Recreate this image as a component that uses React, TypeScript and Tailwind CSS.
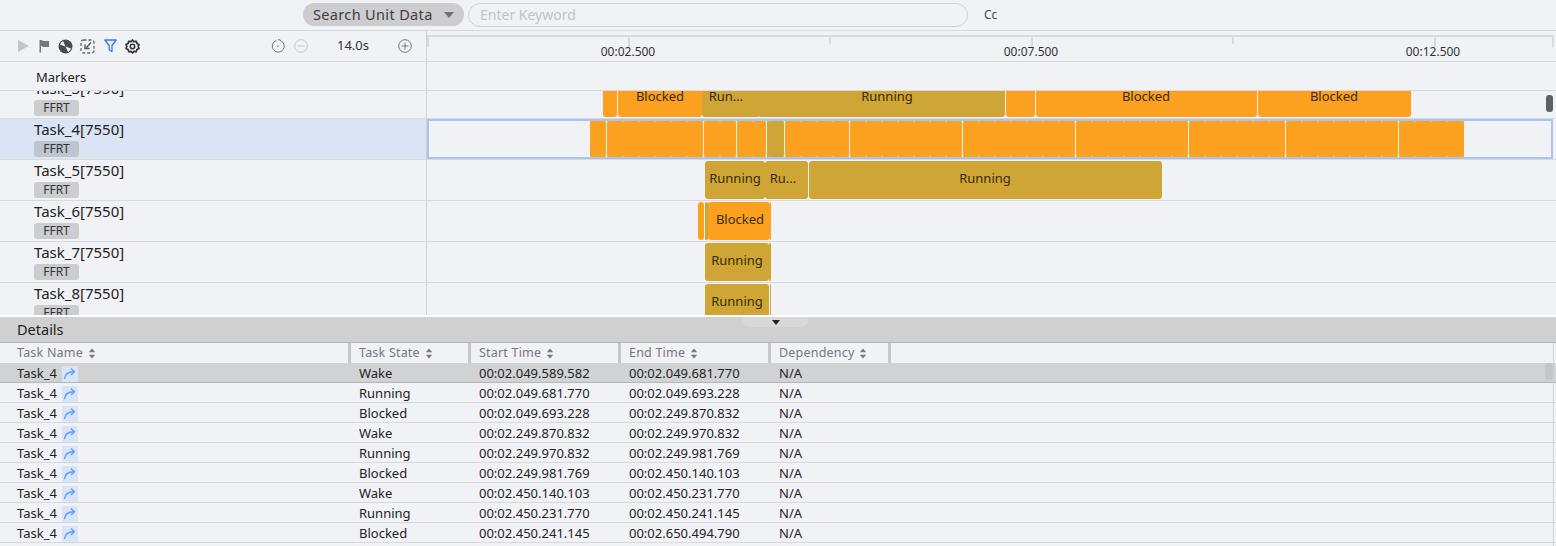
import React from "react";

const ORANGE = "bg-[#fba11f]";
const GOLD = "bg-[#cfa635]";

type Bar = { a: number; b: number; gold?: boolean; label?: string; center?: number; split?: boolean };

const ORIGIN = 427;

const rows: { name: string; bars: Bar[]; selected?: boolean }[] = [
  {
    name: "Task_3[7550]",
    bars: [
      { a: 603, b: 617 },
      { a: 618, b: 702, label: "Blocked", center: 660 },
      { a: 702, b: 760, gold: true, label: "Run...", center: 726 },
      { a: 758, b: 1005, gold: true, label: "Running", center: 887 },
      { a: 1006, b: 1035 },
      { a: 1036, b: 1257, label: "Blocked", center: 1146 },
      { a: 1258, b: 1411, label: "Blocked", center: 1334 },
    ],
  },
  {
    name: "Task_4[7550]",
    selected: true,
    bars: [
      { a: 590, b: 606 },
      { a: 607, b: 703, split: true },
      { a: 704, b: 736, split: true },
      { a: 737, b: 766, split: true },
      { a: 767, b: 769, gold: true },
      { a: 769, b: 784, gold: true },
      { a: 785, b: 849, split: true },
      { a: 850, b: 962, split: true },
      { a: 963, b: 1075, split: true },
      { a: 1076, b: 1188, split: true },
      { a: 1189, b: 1285, split: true },
      { a: 1286, b: 1398, split: true },
      { a: 1399, b: 1464, split: true },
    ],
  },
  {
    name: "Task_5[7550]",
    bars: [
      { a: 705, b: 765, gold: true, label: "Running", center: 735 },
      { a: 765, b: 808, gold: true, label: "Ru...", center: 783 },
      { a: 809, b: 1162, gold: true, label: "Running", center: 985 },
    ],
  },
  {
    name: "Task_6[7550]",
    bars: [
      { a: 698, b: 704 },
      { a: 705, b: 708, gold: true },
      { a: 708, b: 770, label: "Blocked", center: 740 },
      { a: 770, b: 771 },
    ],
  },
  {
    name: "Task_7[7550]",
    bars: [
      { a: 705, b: 769, gold: true, label: "Running", center: 737 },
      { a: 769, b: 771, gold: true },
    ],
  },
  {
    name: "Task_8[7550]",
    bars: [
      { a: 705, b: 769, gold: true, label: "Running", center: 737 },
      { a: 770, b: 771, gold: true },
    ],
  },
];

const detailRows = [
  ["Wake", "00:02.049.589.582", "00:02.049.681.770"],
  ["Running", "00:02.049.681.770", "00:02.049.693.228"],
  ["Blocked", "00:02.049.693.228", "00:02.249.870.832"],
  ["Wake", "00:02.249.870.832", "00:02.249.970.832"],
  ["Running", "00:02.249.970.832", "00:02.249.981.769"],
  ["Blocked", "00:02.249.981.769", "00:02.450.140.103"],
  ["Wake", "00:02.450.140.103", "00:02.450.231.770"],
  ["Running", "00:02.450.231.770", "00:02.450.241.145"],
  ["Blocked", "00:02.450.241.145", "00:02.650.494.790"],
];

function segments(bar: Bar): [number, number][] {
  if (!bar.split) return [[bar.a, bar.b]];
  const out: [number, number][] = [];
  for (let x = bar.a; x < bar.b; x += 16) out.push([x, Math.min(x + 16, bar.b)]);
  return out;
}

function TaskBar({ bar }: { bar: Bar }) {
  const color = bar.gold ? GOLD : ORANGE;
  return (
    <>
      {segments(bar).map(([a, b]) => (
        <div
          key={a}
          className={`absolute top-px h-[38px] rounded-[3px] ${color}`}
          style={{ left: a - ORIGIN, width: b - a }}
        />
      ))}
      {bar.label && (
        <span
          className="absolute top-px flex h-[36px] -translate-x-1/2 items-center whitespace-nowrap text-[13px] text-[#3a2c0c]"
          style={{ left: (bar.center ?? bar.a) - ORIGIN }}
        >
          {bar.label}
        </span>
      )}
    </>
  );
}

function TaskRow({ name, bars, selected }: { name: string; bars: Bar[]; selected?: boolean }) {
  return (
    <div className={`flex h-[41px] shrink-0 border-b border-[#d9dade]`}>
      <div
        className={`flex w-[426px] shrink-0 flex-col items-start pl-[34px] pt-[1px] ${selected ? "bg-[#dbe4f4]" : ""}`}
      >
        <span className="text-[15px] leading-[18px] text-[#222]">{name}</span>
        <span
          className={`mt-[3px] flex h-[16px] w-[45px] items-center justify-center rounded-[3px] text-[12px] text-[#333] ${selected ? "bg-[#bfc5cf]" : "bg-[#cccdcf]"}`}
        >
          FFRT
        </span>
      </div>
      <div className="w-px shrink-0 bg-[#d0d1d4]" />
      <div className="relative flex-1">
        {bars.map((b) => (
          <TaskBar key={b.a} bar={b} />
        ))}
        {selected && (
          <div className="absolute inset-y-0 left-0 w-[1126px] border-2 border-[#a9c4f2]" />
        )}
      </div>
    </div>
  );
}

function SortIcon() {
  return (
    <svg width="8" height="11" viewBox="0 0 8 11" className="ml-[5px]">
      <path d="M4 0.5 L7.2 4.3 H0.8 Z M4 10.5 L0.8 6.7 H7.2 Z" fill="#77797e" />
    </svg>
  );
}

function JumpIcon() {
  return (
    <span className="ml-[5px] flex h-[16px] w-[16px] items-center justify-center bg-[#d8e5f8]">
      <svg width="13" height="13" viewBox="0 0 13 13" fill="none" stroke="#5f9dfb" strokeWidth="1.4">
        <path d="M1.5 12 C1.8 7 5 4.8 11 4.8" />
        <path d="M8 1.5 L11.4 4.8 L8 8" />
      </svg>
    </span>
  );
}

function ToolbarIcons() {
  return (
    <div className="flex items-center">
      <svg width="14" height="14" viewBox="0 0 14 14" className="ml-[16px]">
        <path d="M2 1 L13 7 L2 13 Z" fill="#c4c5c8" />
      </svg>
      <svg width="14" height="14" viewBox="0 0 14 14" className="ml-[7px]">
        <path d="M2.5 1 H5 L6 2 H12 V8 H6 L5 7 H4 V13.5 H2.5 Z" fill="#77787b" />
      </svg>
      <svg width="15" height="15" viewBox="0 0 15 15" className="ml-[7px]">
        <circle cx="7.5" cy="7.5" r="7" fill="#4a4b4e" />
        <path d="M7.5 7.5 L5 2 C3.5 2.8 2.5 4 2 5.5 Z" fill="#f1f2f5" />
        <path d="M7.5 7.5 L10 13 C11.5 12.2 12.5 11 13 9.5 Z" fill="#f1f2f5" />
      </svg>
      <svg width="15" height="15" viewBox="0 0 15 15" fill="none" className="ml-[7px]">
        <rect x="1" y="1" width="13" height="13" rx="2.5" stroke="#66676b" strokeWidth="1.3" strokeDasharray="3 2" />
        <path d="M11 3.5 L6.5 8.5 M5 5.5 V9.5 H9.5" stroke="#55565a" strokeWidth="1.4" />
      </svg>
      <svg width="13" height="14" viewBox="0 0 13 14" fill="none" className="ml-[9px]">
        <path d="M0.8 1 H12.2 L8 6.5 V12.5 L5.2 11 V6.5 Z" stroke="#2f7bf6" strokeWidth="1.3" strokeLinejoin="round" />
      </svg>
      <svg width="15" height="15" viewBox="0 0 15 15" fill="none" className="ml-[8px]">
        <path
          d="M7.5 1 L9 2.6 L11.3 2.3 L11.9 4.5 L14 5.5 L13.2 7.5 L14 9.5 L11.9 10.5 L11.3 12.7 L9 12.4 L7.5 14 L6 12.4 L3.7 12.7 L3.1 10.5 L1 9.5 L1.8 7.5 L1 5.5 L3.1 4.5 L3.7 2.3 L6 2.6 Z"
          stroke="#333437"
          strokeWidth="1.7"
          strokeLinejoin="round"
        />
        <circle cx="7.5" cy="7.5" r="2.2" stroke="#333437" strokeWidth="1.5" />
      </svg>
    </div>
  );
}

function RoundIcon({ kind }: { kind: "timer" | "minus" | "plus" }) {
  const color = kind === "minus" ? "#c4c5c8" : "#77787b";
  return (
    <svg width="14" height="14" viewBox="0 0 14 14" fill="none" stroke={color} strokeWidth="1">
      {kind === "timer" ? (
        <>
          <path d="M5.5 1.4 A6 6 0 1 0 9 1.4" />
          <path d="M7 0.5 L9.5 1.2" />
          <circle cx="7" cy="7.2" r="0.8" fill={color} stroke="none" />
        </>
      ) : (
        <>
          <circle cx="7" cy="7" r="6.3" />
          <path d="M3.5 7 H10.5" />
          {kind === "plus" && <path d="M7 3.5 V10.5" />}
        </>
      )}
    </svg>
  );
}

const ticks = [
  { w: 201, h: "h-[10px]" },
  { w: 201, h: "h-[7px]" },
  { w: 202, h: "h-[10px]" },
  { w: 201, h: "h-[7px]" },
  { w: 202, h: "h-[10px]" },
  { w: 118, h: "h-[10px]" },
];

function Ruler() {
  return (
    <div className="relative flex-1">
      <div className="mt-[4px] flex h-[2px] w-[1127px] bg-[#d9dade]" />
      <div className="flex items-start">
        <div className="h-[10px] w-[2px] bg-[#d9dade]" />
        {ticks.map((t, i) => (
          <div key={i} className="flex justify-end" style={{ width: t.w }}>
            <div className={`w-[2px] bg-[#d9dade] ${t.h}`} />
          </div>
        ))}
      </div>
      {[
        ["00:02.500", 201],
        ["00:07.500", 604],
        ["00:12.500", 1006],
      ].map(([t, x]) => (
        <span
          key={t}
          className="absolute top-[13px] -translate-x-1/2 text-[12px] leading-[16px] text-[#333]"
          style={{ left: x as number }}
        >
          {t}
        </span>
      ))}
    </div>
  );
}

function HeadCell({ label, width }: { label: string; width: string }) {
  return (
    <div className={`flex h-full shrink-0 items-center ${width} border-r-[3px] border-[#c6c7ca] pl-[8px]`}>
      <span className="text-[12.5px] tracking-[0.2px] text-[#77787e]">{label}</span>
      <SortIcon />
    </div>
  );
}

export default function App() {
  return (
    <div
      className="flex h-[546px] w-[1556px] flex-col overflow-hidden bg-[#f1f2f5] text-[#222]"
      style={{ fontFamily: '"Noto Sans", "Open Sans", sans-serif' }}
    >
      {/* search bar */}
      <div className="flex h-[31px] shrink-0 items-center border-b border-[#d9dade] pb-[1px] pl-[303px]">
        <div className="flex h-[23px] w-[161px] items-center justify-between rounded-full bg-[#cdcdcf] pl-[10px] pr-[10px]">
          <span className="whitespace-nowrap text-[14.5px] tracking-[0.35px] text-[#3c3d40]">Search Unit Data</span>
          <svg width="10" height="6" viewBox="0 0 10 6">
            <path d="M0 0 H10 L5 6 Z" fill="#707175" />
          </svg>
        </div>
        <div className="ml-[4px] flex h-[24px] w-[500px] items-center rounded-full border border-[#cfd0d3] pl-[11px]">
          <span className="text-[14px] text-[#c2c3c6]">Enter Keyword</span>
        </div>
        <span className="ml-[16px] text-[12px] text-[#4a4b4e]">Cc</span>
      </div>

      {/* toolbar + ruler */}
      <div className="flex h-[31px] shrink-0 border-b border-[#d9dade]">
        <div className="flex w-[426px] shrink-0 items-center">
          <ToolbarIcons />
          <div className="ml-[131px] flex items-center">
            <RoundIcon kind="timer" />
            <span className="ml-[9px]">
              <RoundIcon kind="minus" />
            </span>
            <span className="w-[90px] text-center text-[13px] text-[#333]">14.0s</span>
            <RoundIcon kind="plus" />
          </div>
        </div>
        <div className="w-px shrink-0 bg-[#d0d1d4]" />
        <Ruler />
      </div>

      {/* markers */}
      <div className="flex h-[29px] shrink-0 border-b border-[#d9dade]">
        <div className="flex w-[426px] items-center pl-[36px] pt-[3px] text-[13px] text-[#222]">Markers</div>
        <div className="w-px shrink-0 bg-[#d0d1d4]" />
      </div>

      {/* task rows */}
      <div className="relative h-[224px] shrink-0 overflow-hidden">
        <div className="-mt-[13px] flex flex-col">
          {rows.map((r) => (
            <TaskRow key={r.name} name={r.name} bars={r.bars} selected={r.selected} />
          ))}
        </div>
        <div className="absolute right-[3px] top-[4px] h-[17px] w-[7px] rounded-[3px] bg-[#5f6064]" />
      </div>

      {/* details */}
      <div className="h-[2px] shrink-0 bg-white" />
      <div className="relative flex h-[26px] shrink-0 items-center border-b border-[#b4b5b8] bg-[#d0d0d0] pl-[17px] text-[14.5px] text-[#222]">
        Details
        <div className="absolute left-[743px] top-0 flex h-[10px] w-[65px] justify-center rounded-b-[6px] bg-[#d8d8d9]">
          <svg width="8" height="5" viewBox="0 0 8 5" className="mt-[3px]">
            <path d="M0 0 H8 L4 5 Z" fill="#1f1f1f" />
          </svg>
        </div>
      </div>

      {/* table */}
      <div className="relative flex-1 overflow-hidden">
        <div className="flex h-[20px] items-stretch">
          <div className="flex h-full w-[351px] shrink-0 items-center border-r-[3px] border-[#c6c7ca] pl-[17px]">
            <span className="text-[12.5px] tracking-[0.2px] text-[#77787e]">Task Name</span>
            <SortIcon />
          </div>
          <HeadCell label="Task State" width="w-[120px]" />
          <HeadCell label="Start Time" width="w-[150px]" />
          <HeadCell label="End Time" width="w-[150px]" />
          <HeadCell label="Dependency" width="w-[120px]" />
        </div>
        {detailRows.map((r, i) => (
          <div
            key={i}
            className={`flex h-[20px] items-center border-b pt-[2px] text-[13px] text-[#222] ${i === 0 ? "border-[#b4b5b8] bg-[#d1d2d4]" : "border-[#d8d9dc]"}`}
          >
            <div className="flex w-[359px] shrink-0 items-center pl-[17px]">
              Task_4
              <JumpIcon />
            </div>
            <div className="w-[120px] shrink-0">{r[0]}</div>
            <div className="w-[150px] shrink-0">{r[1]}</div>
            <div className="w-[150px] shrink-0">{r[2]}</div>
            <div>N/A</div>
          </div>
        ))}
        <div className="absolute right-[3px] top-[20px] h-[17px] w-[8px] rounded-[3px] bg-[#c4c5c7]" />
        <div className="absolute bottom-0 right-[2px] top-0 w-px bg-[#d0d1d4]" />
      </div>
    </div>
  );
}
